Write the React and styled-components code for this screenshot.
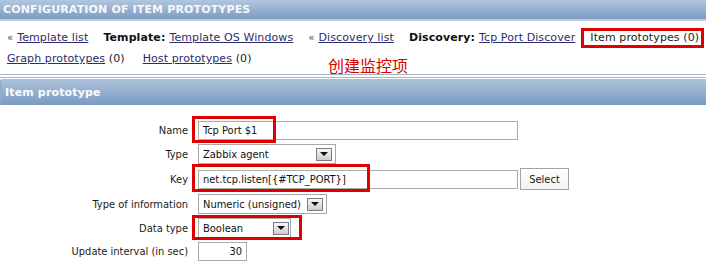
import React from "react";
import styled, { createGlobalStyle } from "styled-components";

const Global = createGlobalStyle`
  html, body { margin: 0; padding: 0; background: #fff; }
  body { font-family: "DejaVu Sans", Verdana, sans-serif; font-size: 11px; color: #111; }
`;

const Page = styled.div`
  width: 706px;
`;

const TitleBar = styled.div`
  height: 19px;
  line-height: 19px;
  padding-left: 3px;
  background: linear-gradient(#b2c6dd, #7c9cc3);
  border-bottom: 2px solid #bccde1;
  color: #f6f8fb;
  font-weight: bold;
  font-size: 11px;
  letter-spacing: 0.15px;
  white-space: nowrap;
`;

const Nav = styled.div`
  position: relative;
  padding: 6px 0 5px 7px;
  border-bottom: 1px solid #a3b6cf;
  letter-spacing: 0.1px;
`;

const NavRow = styled.div`
  display: flex;
  align-items: center;
  height: 21px;
  gap: ${(p) => p.$gap || 15}px;
  white-space: nowrap;
`;

const NavItem = styled.span`
  position: relative;
  display: inline-flex;
  align-items: center;
  gap: 4px;
  color: #1a1a1a;
`;

const Link = styled.a`
  color: #2c2c6c;
  text-decoration: underline;
  cursor: pointer;
`;

const Caption = styled.b`
  font-weight: bold;
  color: #111;
`;

const Arrow = styled.span`
  color: #444;
  font-size: 10px;
`;

const Highlight = styled.div`
  position: absolute;
  border: 3px solid #e00000;
  box-sizing: border-box;
  pointer-events: none;
`;

const Note = styled.div`
  position: absolute;
  left: 328px;
  top: 36px;
  font-family: "Noto Sans CJK SC", sans-serif;
  font-size: 16px;
  line-height: 16px;
  color: #d90000;
  letter-spacing: 0;
`;

const Section = styled.div`
  margin-top: 2px;
  border-top: 1px solid #a3b6cf;
  padding-top: 1px;
`;

const SectionHeader = styled.div`
  height: 26px;
  line-height: 27px;
  padding-left: 4px;
  box-sizing: border-box;
  background: linear-gradient(#adc2da, #7b9bc2);
  border-left: 1px solid #8fa8c8;
  border-top-left-radius: 3px;
  color: #fafbfd;
  font-weight: bold;
  font-size: 11px;
  letter-spacing: 0.15px;
`;

const Form = styled.div`
  display: grid;
  grid-template-columns: 188px 1fr;
  column-gap: 10px;
  row-gap: 4px;
  padding-top: 16px;
  font-family: "DejaVu Sans Condensed", "DejaVu Sans", sans-serif;
  font-size: 11px;
`;

const Label = styled.div`
  text-align: right;
  align-self: center;
  color: #1c1c1c;
  white-space: nowrap;
`;

const Field = styled.div`
  position: relative;
  display: flex;
  align-items: center;
  gap: 2px;
`;

const Input = styled.div`
  box-sizing: border-box;
  height: 19px;
  width: ${(p) => p.$w}px;
  border: 1px solid #ababab;
  padding: 0 4px;
  display: flex;
  align-items: center;
  justify-content: ${(p) => (p.$right ? "flex-end" : "flex-start")};
  color: #111;
  background: #fff;
  white-space: nowrap;
`;

const SelectBox = styled.div`
  box-sizing: border-box;
  height: 20px;
  width: ${(p) => p.$w}px;
  border: 1px solid #a8a8a8;
  padding: 0 ${(p) => p.$pr ?? 3}px 0 4px;
  display: flex;
  align-items: center;
  justify-content: space-between;
  color: #111;
  background: #fff;
  white-space: nowrap;
`;

const DropButton = styled.span`
  box-sizing: border-box;
  width: 16px;
  height: 13px;
  border: 1px solid #7c7c7c;
  background: linear-gradient(#f7f7f7, #cdcdcd);
  display: flex;
  align-items: center;
  justify-content: center;
  &::after {
    content: "";
    border-left: 4px solid transparent;
    border-right: 4px solid transparent;
    border-top: 4px solid #111;
  }
`;

const Button = styled.button`
  box-sizing: border-box;
  height: 22px;
  width: 49px;
  border: 1px solid #a3a3a3;
  background: linear-gradient(#ffffff, #f3f3f3);
  font: inherit;
  color: #1a1a1a;
  padding: 0;
`;

const Select = ({ w, pr, children }) => (
  <SelectBox $w={w} $pr={pr}>
    <span>{children}</span>
    <DropButton />
  </SelectBox>
);

export default function App() {
  return (
    <Page>
      <Global />
      <TitleBar>CONFIGURATION OF ITEM PROTOTYPES</TitleBar>
      <Nav>
        <NavRow $gap={15}>
          <NavItem>
            <Arrow>«</Arrow>
            <Link>Template list</Link>
          </NavItem>
          <NavItem>
            <Caption>Template:</Caption>
            <Link>Template OS Windows</Link>
          </NavItem>
          <NavItem>
            <Arrow>«</Arrow>
            <Link>Discovery list</Link>
          </NavItem>
          <NavItem>
            <Caption>Discovery:</Caption>
            <Link>Tcp Port Discover</Link>
          </NavItem>
          <NavItem>
            Item prototypes (0)
            <Highlight style={{ left: -9, right: -5, top: -3, bottom: -4 }} />
          </NavItem>
        </NavRow>
        <NavRow $gap={18}>
          <NavItem>
            <span>
              <Link>Graph prototypes</Link> (0)
            </span>
          </NavItem>
          <NavItem>
            <span>
              <Link>Host prototypes</Link> (0)
            </span>
          </NavItem>
        </NavRow>
        <Note>创建监控项</Note>
      </Nav>
      <Section>
        <SectionHeader>Item prototype</SectionHeader>
        <Form>
          <Label>Name</Label>
          <Field>
            <Input $w={320}>Tcp Port $1</Input>
            <Highlight style={{ left: -6, top: -5, width: 84, height: 27 }} />
          </Field>

          <Label>Type</Label>
          <Field>
            <Select w={138}>Zabbix agent</Select>
          </Field>

          <Label>Key</Label>
          <Field>
            <Input $w={320}>net.tcp.listen[{"{#TCP_PORT}"}]</Input>
            <Button>Select</Button>
            <Highlight style={{ left: -6, top: -4, width: 178, height: 28 }} />
          </Field>

          <Label>Type of information</Label>
          <Field>
            <Select w={129}>Numeric (unsigned)</Select>
          </Field>

          <Label>Data type</Label>
          <Field>
            <Select w={93} pr={1}>Boolean</Select>
            <Highlight style={{ left: -6, top: -3, width: 110, height: 25 }} />
          </Field>

          <Label>Update interval (in sec)</Label>
          <Field>
            <Input $w={49} $right>30</Input>
          </Field>
        </Form>
      </Section>
    </Page>
  );
}
